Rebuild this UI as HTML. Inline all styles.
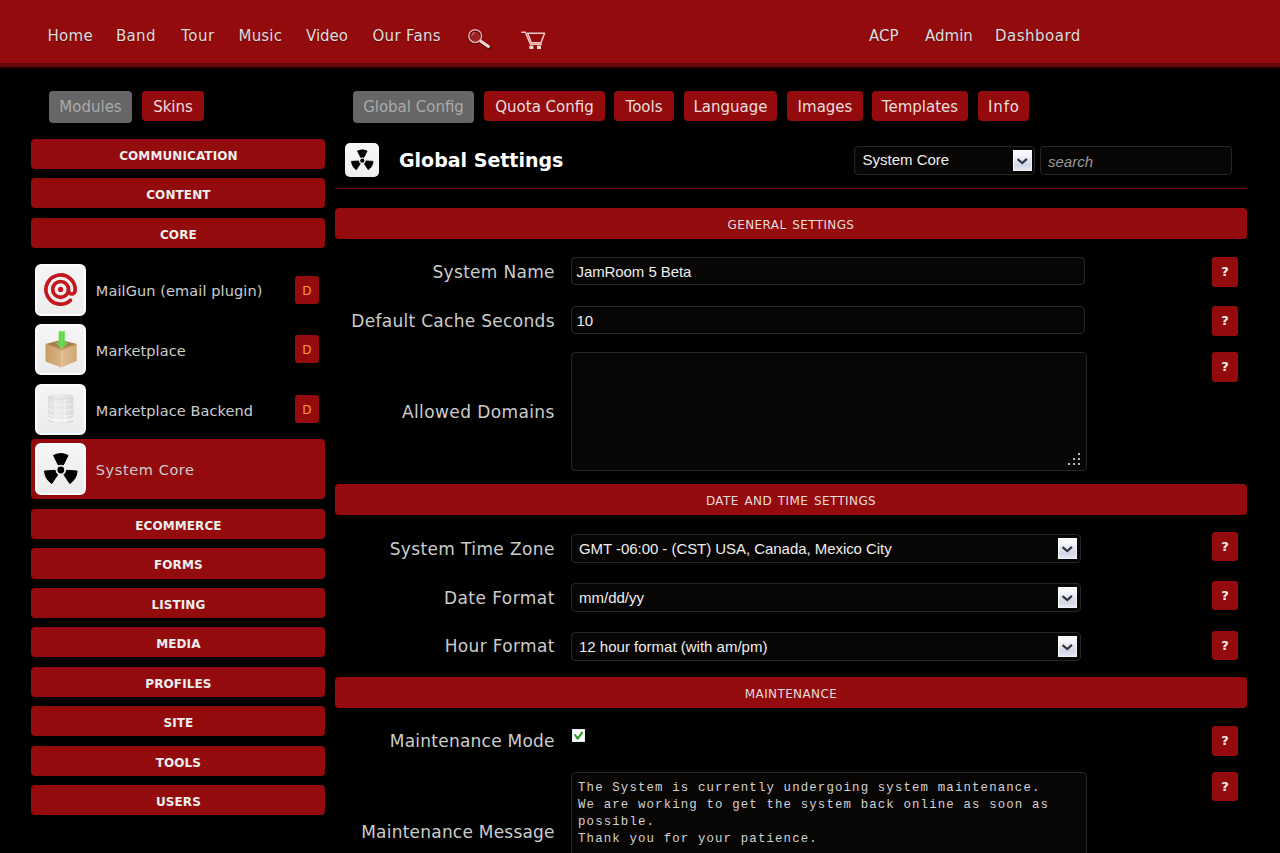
<!DOCTYPE html>
<html lang="en">
<head>
<meta charset="utf-8">
<title>Global Settings - System Core</title>
<style>
*{box-sizing:border-box;margin:0;padding:0}
html,body{width:1280px;height:853px;overflow:hidden;background:#000}
body{position:relative;font-family:"DejaVu Sans","Liberation Sans",sans-serif;color:#ccc;font-size:15px}
a{color:inherit;text-decoration:none}
ul{list-style:none}
/* header */
#header{position:absolute;left:0;top:0;width:1280px;height:67px;background:#940b0d;border-bottom:4px solid #650708;box-shadow:0 1px 3px rgba(70,0,0,.75)}
#header .nav a{position:absolute;top:26px;height:20px;line-height:20px;font-size:15px;color:#ddd;white-space:nowrap;text-shadow:0 1px 1px rgba(60,0,0,.6)}
#header svg{position:absolute}
/* tabs */
.tab{position:absolute;top:90.7px;height:30.6px;line-height:32px;border-radius:4px;background:#940b0d;color:#eadede;font-size:15px;text-align:center;white-space:nowrap}
.tab.on{background:#666;color:#aaa;top:91.3px;height:31.5px;line-height:33px}
/* sidebar */
.cat{position:absolute;left:31.3px;width:294.2px;height:30.2px;line-height:35px;letter-spacing:.1px;border-radius:4px;background:#940b0d;color:#eee;font-size:12px;font-weight:bold;text-align:center;text-transform:uppercase}
.mod{position:absolute;left:31.3px;width:294.2px;height:60px;border-radius:4px}
.mod.cur{background:#940b0d}
.mod .ico{position:absolute;left:3.7px;top:4.2px;width:51px;height:51.4px;border-radius:6px;background:linear-gradient(#f5f5f5,#ececec);border:2px solid #fcfcfc;overflow:hidden}
.mod .ico svg{position:absolute;left:-2px;top:-2px;width:51px;height:51px}
.mod .name{position:absolute;left:64.5px;top:0;line-height:63px;font-size:14.5px;letter-spacing:.1px;color:#ccc;white-space:nowrap}
.mod .d{position:absolute;left:263.5px;top:15.5px;width:24px;height:28px;line-height:30px;border-radius:3px;background:#940b0d;color:#f93;font-size:12px;text-align:center}
/* main */
#title{position:absolute;left:335px;top:139px;width:912px;height:50px;border-bottom:1px solid #650c1c}
#title .ico{position:absolute;left:9.5px;top:4px;width:34.5px;height:34px;border-radius:5px;background:linear-gradient(#f8f8f8,#efefef);overflow:hidden}
#title .ico svg{position:absolute;left:0;top:0}
#title h1{position:absolute;left:64px;top:8px;font-size:19px;line-height:26px;font-weight:bold;color:#fff;white-space:nowrap}
.sec{position:absolute;left:335px;width:912px;height:31px;line-height:34px;border-radius:4px;background:#940b0d;color:#e6dcdc;font-size:12px;letter-spacing:.38px;word-spacing:1.6px;text-align:center;text-transform:uppercase}
.lbl{position:absolute;left:335px;width:219.8px;text-align:right;font-size:17px;line-height:24px;letter-spacing:.3px;color:#ccc;white-space:nowrap}
.fld{position:absolute;left:571px;background:#080505;border:1px solid #262626;border-radius:4px;color:#eee;font-family:"Liberation Sans",sans-serif;font-size:15px;padding-left:6px;white-space:nowrap;overflow:hidden}
.help{position:absolute;left:1211.8px;width:26.4px;height:29.4px;line-height:30px;border-radius:3px;background:#940b0d;color:#eee;font-size:13px;font-weight:bold;text-align:center}
.sel{position:absolute}
.arrow{position:absolute;right:3.4px;top:3.2px;width:18.2px;height:21px;background:linear-gradient(#f6f6fb 20%,#d3d6e6 75%,#e4e6f0);border:1px solid #fff;border-right-color:#f0f0f6;border-bottom-color:#f0f0f6}
.arrow svg{position:absolute;left:-1px;top:-1px}
.ta{white-space:pre}
.grip{position:absolute;right:6px;bottom:5px;width:12px;height:12px;background:
 linear-gradient(#bbb,#bbb) 10px 0/2px 2px no-repeat,
 linear-gradient(#bbb,#bbb) 5px 5px/2px 2px no-repeat,
 linear-gradient(#bbb,#bbb) 10px 5px/2px 2px no-repeat,
 linear-gradient(#bbb,#bbb) 0 10px/2px 2px no-repeat,
 linear-gradient(#bbb,#bbb) 5px 10px/2px 2px no-repeat,
 linear-gradient(#bbb,#bbb) 10px 10px/2px 2px no-repeat}
.mono{font-family:"Liberation Mono",monospace;font-size:12.4px;letter-spacing:1.13px;line-height:17px;padding:6.6px 0 0 6px;color:#d2d2d2}
.chk{position:absolute;left:572px;top:729.1px;width:13px;height:13px;background:#fff;border:0;box-shadow:inset 0 0 0 1px #e4ecf4}
.chk svg{position:absolute;left:0;top:0}
</style>
</head>
<body>
<div id="header">
  <div class="nav">
    <a href="#" style="left:47.5px;letter-spacing:.3px">Home</a>
    <a href="#" style="left:116px;letter-spacing:.3px">Band</a>
    <a href="#" style="left:181px;letter-spacing:.6px">Tour</a>
    <a href="#" style="left:238.5px;letter-spacing:.2px">Music</a>
    <a href="#" style="left:306px">Video</a>
    <a href="#" style="left:372.5px;letter-spacing:.3px">Our Fans</a>
    <a href="#" style="left:869px">ACP</a>
    <a href="#" style="left:925px">Admin</a>
    <a href="#" style="left:995px;letter-spacing:.5px">Dashboard</a>
  </div>
  <svg style="left:465px;top:26px" width="28" height="26" viewBox="0 0 28 26">
    <line x1="16.4" y1="16.3" x2="24.2" y2="21.7" stroke="#4a0506" stroke-width="3.6" stroke-linecap="round"/>
    <circle cx="10.2" cy="10.9" r="6.4" fill="rgba(255,255,255,.09)" stroke="#5a0608" stroke-width="2.6"/>
    <circle cx="10.2" cy="10.1" r="6.4" fill="none" stroke="#e6a6a6" stroke-width="1.5"/>
    <path d="M6.8 9.5a3.6 3.6 0 0 1 3-3" fill="none" stroke="#d88" stroke-width="1"/>
    <line x1="15.8" y1="15.3" x2="23.4" y2="20.6" stroke="#f0d6d6" stroke-width="3" stroke-linecap="round"/>
  </svg>
  <svg style="left:519px;top:29px" width="28" height="22" viewBox="0 0 28 22">
    <g fill="none" stroke="#eecaca" stroke-width="1.5" stroke-linejoin="round" stroke-linecap="round">
      <path d="M2.8 3.3h3.6l5 12h11"/>
      <path d="M8.6 4.3h17l-3.6 9.4h-9.6z"/>
    </g>
    <rect x="10.4" y="16.6" width="4" height="3.4" fill="#f0d8d8"/>
    <rect x="18" y="16.6" width="4" height="3.4" fill="#f0d8d8"/>
  </svg>
</div>

<a class="tab on" href="#" style="left:49px;width:83px">Modules</a>
<a class="tab" href="#" style="left:142px;width:62px">Skins</a>

<a class="tab on" href="#" style="left:353px;width:121px">Global Config</a>
<a class="tab" href="#" style="left:484px;width:121px">Quota Config</a>
<a class="tab" href="#" style="left:614px;width:60px">Tools</a>
<a class="tab" href="#" style="left:684px;width:93px">Language</a>
<a class="tab" href="#" style="left:787px;width:76px">Images</a>
<a class="tab" href="#" style="left:872px;width:96px">Templates</a>
<a class="tab" href="#" style="left:978px;width:51px;letter-spacing:.9px;text-indent:.9px">Info</a>

<div id="sidebar">
  <a class="cat" href="#" style="top:138.8px">Communication</a>
  <a class="cat" href="#" style="top:178.2px">Content</a>
  <a class="cat" href="#" style="top:217.6px">Core</a>
  <div class="mod" style="top:260px"><div class="ico"><svg viewBox="0 0 51 51"><g fill="none" stroke="#c4161c" stroke-width="3.7" stroke-linecap="round"><path d="M35.4 36.3A14.6 14.6 0 1 1 40.1 26.7A3.3 3.3 0 0 1 33.5 26.7"/><circle cx="25.6" cy="25.4" r="7.9"/></g><circle cx="25.6" cy="25.4" r="2.6" fill="#c4161c"/></svg></div><span class="name">MailGun (email plugin)</span><span class="d">D</span></div>
  <div class="mod" style="top:319.5px"><div class="ico"><svg viewBox="0 0 51 51"><defs><linearGradient id="bl" x1="0" x2="1"><stop offset="0" stop-color="#c79d68"/><stop offset="1" stop-color="#d8b483"/></linearGradient><linearGradient id="br" x1="0" x2="1"><stop offset="0" stop-color="#e0bf93"/><stop offset="1" stop-color="#cfa874"/></linearGradient><linearGradient id="ga" x1="0" x2="1"><stop offset="0" stop-color="#34b522"/><stop offset=".5" stop-color="#6fe058"/><stop offset="1" stop-color="#34b522"/></linearGradient></defs><polygon points="10.5,19.9 25.9,16.1 41.7,19.9 26.3,25.1" fill="#a67c4a"/><polygon points="10.5,19.9 26.3,25.1 26.3,43.5 10.5,37.5" fill="url(#bl)"/><polygon points="41.7,19.9 26.3,25.1 26.3,43.5 41.7,37.1" fill="url(#br)"/><polygon points="10.5,19.9 26.3,25.1 41.7,19.9 41.7,21.2 26.3,26.6 10.5,21.2" fill="#c59b67"/><path d="M24 7.4h5.6v11.6h2.8l-5.7 5.2-5.5-5.2h2.8z" fill="url(#ga)" stroke="#7fe36a" stroke-opacity=".55" stroke-width="1.2" stroke-linejoin="round"/></svg></div><span class="name">Marketplace</span><span class="d">D</span></div>
  <div class="mod" style="top:379.5px"><div class="ico"><svg viewBox="0 0 51 51"><defs><linearGradient id="cyl" x1="0" x2="1" y1="0" y2="0"><stop offset="0" stop-color="#dedede"/><stop offset=".35" stop-color="#ececec"/><stop offset=".7" stop-color="#e6e6e6"/><stop offset="1" stop-color="#d8d8d8"/></linearGradient></defs><path d="M13.2 12.6c0-1.6 5.6-2.6 12.6-2.6s12.6 1 12.6 2.6v24.2c0 1.8-5.6 3.1-12.6 3.1s-12.6-1.3-12.6-3.1z" fill="url(#cyl)"/><path d="M13.2 12.6c0 1.5 5.6 2.5 12.6 2.5s12.6-1 12.6-2.5" fill="none" stroke="#d4d4d4" stroke-width=".7"/><g fill="none" stroke="#f4f4f4" stroke-width=".9"><path d="M13.2 18.6c0 1.5 5.6 2.5 12.6 2.5s12.6-1 12.6-2.5M13.2 24.2c0 1.5 5.6 2.5 12.6 2.5s12.6-1 12.6-2.5M13.2 29.8c0 1.5 5.6 2.5 12.6 2.5s12.6-1 12.6-2.5M29.8 15v24.5M20.4 14.8v24.6"/><path d="M13.2 33.6c0 1.7 5.6 2.9 12.6 2.9s12.6-1.2 12.6-2.9" stroke="#fafafa" stroke-width="1.6"/></g></svg></div><span class="name">Marketplace Backend</span><span class="d">D</span></div>
  <div class="mod cur" style="top:439.3px;height:59.3px"><div class="ico"><svg viewBox="0 0 51 51"><path fill="#000" stroke="#000" stroke-width="1" stroke-linejoin="round" d="M23.26 21.90L18.53 12.41A16.3 16.3 0 0 1 33.07 12.41L28.34 21.90A5.7 5.7 0 0 0 23.26 21.90ZM31.49 27.35L42.07 28.00A16.3 16.3 0 0 1 34.80 40.59L28.95 31.75A5.7 5.7 0 0 0 31.49 27.35ZM22.65 31.75L16.80 40.59A16.3 16.3 0 0 1 9.53 28.00L20.11 27.35A5.7 5.7 0 0 0 22.65 31.75Z"/><circle cx="25.8" cy="27" r="3.4"/></svg></div><span class="name" style="letter-spacing:.6px">System Core</span></div>
  <a class="cat" href="#" style="top:508.9px">Ecommerce</a>
  <a class="cat" href="#" style="top:548.4px">Forms</a>
  <a class="cat" href="#" style="top:587.8px">Listing</a>
  <a class="cat" href="#" style="top:627.2px">Media</a>
  <a class="cat" href="#" style="top:666.7px">Profiles</a>
  <a class="cat" href="#" style="top:706.1px">Site</a>
  <a class="cat" href="#" style="top:745.5px">Tools</a>
  <a class="cat" href="#" style="top:785.0px">Users</a>
</div>

<div id="title">
  <div class="ico"><svg width="34.5" height="34" viewBox="0 0 34.5 34"><path fill="#000" stroke="#000" stroke-width=".8" stroke-linejoin="round" d="M15.65 14.39L12.48 8.03A10.8 10.8 0 0 1 22.12 8.03L18.95 14.39A3.7 3.7 0 0 0 15.65 14.39ZM20.99 17.93L28.08 18.36A10.8 10.8 0 0 1 23.26 26.71L19.34 20.79A3.7 3.7 0 0 0 20.99 17.93ZM15.26 20.79L11.34 26.71A10.8 10.8 0 0 1 6.52 18.36L13.61 17.93A3.7 3.7 0 0 0 15.26 20.79Z"/><circle cx="17.3" cy="17.7" r="2.1"/></svg></div>
  <h1>Global Settings</h1>
</div>
<div class="fld sel" style="left:854px;top:146px;width:181px;height:29px;line-height:26px;padding-left:7.5px">System Core<span class="arrow" style="right:2.2px;top:3px;width:18.8px"><svg width="19" height="21" viewBox="0 0 19 21"><path d="M4.5 9.1L9.3 13.1L13.9 8.9" fill="none" stroke="#30343f" stroke-width="2.1"/></svg></span></div>
<div class="fld" style="left:1040px;top:146px;width:192px;height:28.5px;line-height:29px;color:#999;font-style:italic;padding-left:7px">search</div>

<div class="sec" style="top:208px">General Settings</div>
<div class="lbl" style="top:260px">System Name</div>
<div class="fld" style="top:257px;width:513.8px;height:27.6px;line-height:28px;padding-left:4.5px;letter-spacing:-.08px">JamRoom 5 Beta</div>
<div class="help" style="top:257.2px">?</div>

<div class="lbl" style="top:309px">Default Cache Seconds</div>
<div class="fld" style="top:306.4px;width:513.8px;height:27.6px;line-height:28px;padding-left:4.5px">10</div>
<div class="help" style="top:306.2px">?</div>

<div class="lbl" style="top:400px;letter-spacing:.4px">Allowed Domains</div>
<div class="fld ta" style="top:352px;width:516px;height:119px"><span class="grip"></span></div>
<div class="help" style="top:352.4px">?</div>

<div class="sec" style="top:484px">Date and Time Settings</div>
<div class="lbl" style="top:537px;letter-spacing:.38px">System Time Zone</div>
<div class="fld sel" style="top:534.3px;width:510px;height:28.5px;line-height:28px;padding-left:7px;letter-spacing:-.05px">GMT -06:00 - (CST) USA, Canada, Mexico City<span class="arrow"><svg width="19" height="21" viewBox="0 0 19 21"><path d="M4.5 9.1L9.3 13.1L13.9 8.9" fill="none" stroke="#30343f" stroke-width="2.1"/></svg></span></div>
<div class="help" style="top:532px">?</div>

<div class="lbl" style="top:586px;letter-spacing:.45px">Date Format</div>
<div class="fld sel" style="top:583.3px;width:510px;height:28.5px;line-height:28px;padding-left:7px">mm/dd/yy<span class="arrow"><svg width="19" height="21" viewBox="0 0 19 21"><path d="M4.5 9.1L9.3 13.1L13.9 8.9" fill="none" stroke="#30343f" stroke-width="2.1"/></svg></span></div>
<div class="help" style="top:581px">?</div>

<div class="lbl" style="top:634px;letter-spacing:.35px">Hour Format</div>
<div class="fld sel" style="top:632.3px;width:510px;height:28.5px;line-height:28px;padding-left:7px">12 hour format (with am/pm)<span class="arrow"><svg width="19" height="21" viewBox="0 0 19 21"><path d="M4.5 9.1L9.3 13.1L13.9 8.9" fill="none" stroke="#30343f" stroke-width="2.1"/></svg></span></div>
<div class="help" style="top:630.5px">?</div>

<div class="sec" style="top:677px">Maintenance</div>
<div class="lbl" style="top:729px;letter-spacing:.24px">Maintenance Mode</div>
<div class="chk"><svg width="13" height="13" viewBox="0 0 13 13"><path d="M3.1 6l2.5 3.6 4.5-6" fill="none" stroke="#2c9a1c" stroke-width="2.1" stroke-linejoin="round" stroke-linecap="round"/></svg></div>
<div class="help" style="top:726.3px">?</div>

<div class="lbl" style="top:820px;letter-spacing:.22px">Maintenance Message</div>
<div class="fld ta mono" style="top:772px;width:516px;height:119px">The System is currently undergoing system maintenance.
We are working to get the system back online as soon as
possible.
Thank you for your patience.</div>
<div class="help" style="top:772px">?</div>
</body>
</html>
